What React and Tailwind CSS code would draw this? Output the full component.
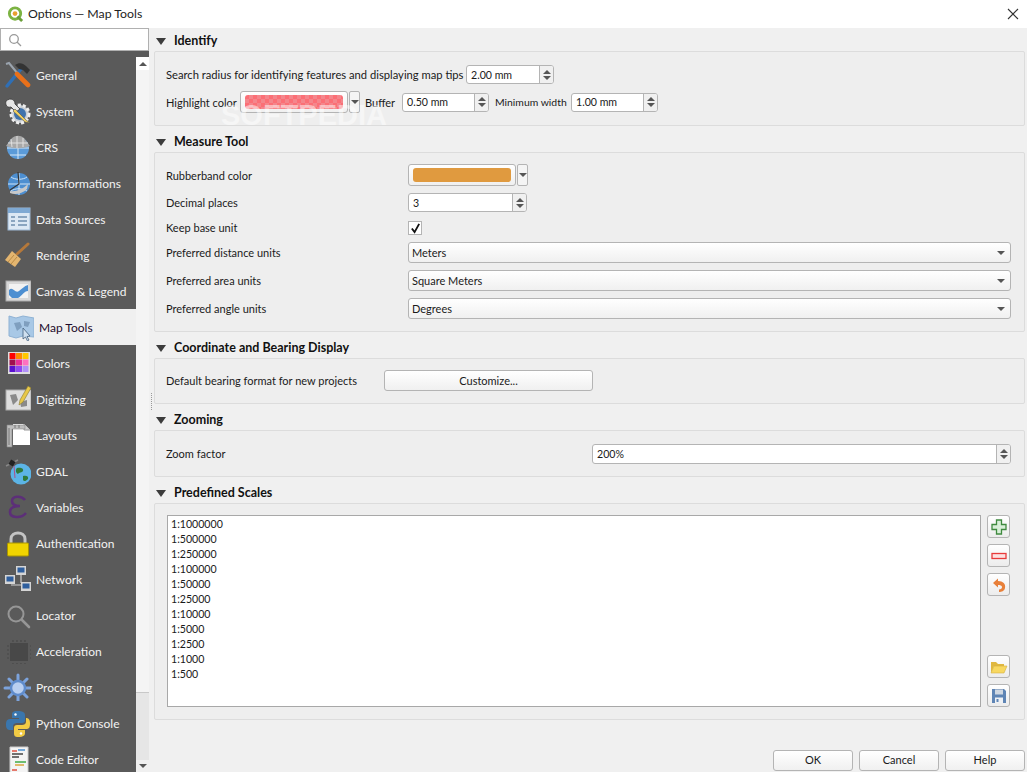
import React from "react";

const I = ({ children }) => (
  <svg viewBox="0 0 28 28" className="w-7 h-7 shrink-0" fill="none">{children}</svg>
);

const icons = {
  general: (
    <I>
      <path d="M4 25 L18 8" stroke="#2f6fb5" strokeWidth="3.4" strokeLinecap="round" />
      <path d="M12 4 C16 1 20 2 23 5 L27 9 L24 13 L20 9 L16 8 Z" fill="#333" />
      <path d="M3 3 L6 2 L15 13" stroke="#9aa3ad" strokeWidth="2" />
      <path d="M14 13 L25 24" stroke="#e8701a" strokeWidth="4.6" strokeLinecap="round" />
    </I>
  ),
  system: (
    <I>
      <circle cx="17" cy="17" r="9" fill="#c9ced4" stroke="#eee" strokeWidth="3" strokeDasharray="3 2" />
      <circle cx="17" cy="17" r="6" fill="#3f73ad" />
      <path d="M3 4 C8 0 12 3 12 7 L17 12 L13 15 L8 10 C4 11 2 8 3 4 Z" fill="#e6e6e6" stroke="#333" strokeWidth="0.8" />
      <path d="M12 12 L23 23 L27 26 L22 25 L10 14 Z" fill="#f0d060" stroke="#555" strokeWidth="0.6" />
    </I>
  ),
  crs: (
    <I>
      <circle cx="15" cy="15" r="11" fill="#5b9bd9" />
      <path d="M4 15 H26 M15 4 V26 M7 22 H23 M8 8 C12 12 18 12 22 8" stroke="#d7e8f7" strokeWidth="1" />
      <path d="M3 13 L9 5 C13 2 17 2 21 5 L27 13 C20 16 10 16 3 13 Z" fill="#a8a8a8" />
      <path d="M8 6 L9 14 M14 3 V15 M20 5 L20 14 M5 10 H25" stroke="#e0e0e0" strokeWidth="1" />
    </I>
  ),
  transform: (
    <I>
      <circle cx="16" cy="15" r="11" fill="#4d8fd1" />
      <path d="M5 15 H27 M16 4 V26 M8 8 C12 11 20 11 24 8 M8 22 C12 19 20 19 24 22" stroke="#cfe3f6" strokeWidth="1" />
      <path d="M7 22 C13 23 20 20 25 15 L24 20 C19 25 12 26 7 24 Z" fill="#c9c9c9" />
      <path d="M15 3 L16 15 L7 21" stroke="#333" strokeWidth="1.2" />
    </I>
  ),
  data: (
    <I>
      <rect x="5" y="3" width="22" height="22" fill="#dce8f4" stroke="#9db8d4" />
      <rect x="5" y="3" width="22" height="5" fill="#7fa9d3" />
      <path d="M8 12 H12 M15 12 H24 M8 16 H12 M15 16 H24 M8 20 H12 M15 20 H24" stroke="#6f8fae" strokeWidth="1.6" />
    </I>
  ),
  render: (
    <I>
      <path d="M14 13 L25 3" stroke="#b5783a" strokeWidth="3" strokeLinecap="round" />
      <path d="M9 10 L18 18 L12 26 L2 19 Z" fill="#e3b56f" />
      <path d="M5 21 L11 14 M8 23 L14 16" stroke="#b98a45" strokeWidth="1" />
    </I>
  ),
  canvas: (
    <I>
      <rect x="3" y="4" width="25" height="20" fill="#d8d8d8" stroke="#aaa" />
      <rect x="6" y="7" width="19" height="14" fill="#f2f2f2" />
      <path d="M6 13 C10 9 12 17 16 14 C19 12 21 9 25 8 V14 C21 14 19 19 15 21 H9 L6 18 Z" fill="#4d8fd1" />
    </I>
  ),
  maptools: (
    <I>
      <path d="M3 3 L10 5 L17 3 L28 5 V24 L17 23 L10 25 L3 23 Z" fill="#a8c8e6" stroke="#8fb2d4" />
      <path d="M8 10 L14 9 L16 14 L11 18 Z M18 8 L24 9 L22 14 L18 13 Z" fill="#7f9fbf" />
      <path d="M17 15 L17 26 L19.5 24 L21.5 28 L23 27 L21 23.5 L24 23 Z" fill="#cfe0f0" stroke="#43607e" strokeWidth="0.8" />
    </I>
  ),
  colors: (
    <I>
      <rect x="5" y="3" width="22" height="22" fill="#ddd" />
      <rect x="6.5" y="4" width="6" height="6" fill="#ff0000" /><rect x="13" y="4" width="6" height="6" fill="#ff8c00" /><rect x="19.5" y="4" width="6" height="6" fill="#ffc800" />
      <rect x="6.5" y="10.5" width="6" height="6" fill="#a01050" /><rect x="13" y="10.5" width="6" height="6" fill="#e8309a" /><rect x="19.5" y="10.5" width="6" height="6" fill="#ff70c0" />
      <rect x="6.5" y="17" width="6" height="6" fill="#5a10d0" /><rect x="13" y="17" width="6" height="6" fill="#9048f0" /><rect x="19.5" y="17" width="6" height="6" fill="#b090f8" />
    </I>
  ),
  digit: (
    <I>
      <rect x="3" y="5" width="25" height="20" fill="#dedede" stroke="#aaa" />
      <path d="M7 10 L13 9 L15 15 L10 20 Z M17 17 L24 15 L24 21 L18 22 Z" fill="#8a8a8a" />
      <path d="M25 1 L28 3 L20 17 L16 20 L17 15 Z" fill="#e8c84a" stroke="#8a7a30" strokeWidth="0.6" />
    </I>
  ),
  layouts: (
    <I>
      <path d="M10 3 H21 L27 9 V24 H10 Z" fill="#fff" />
      <path d="M21 3 V9 H27" fill="#ccc" stroke="#999" />
      <path d="M4 4 H22 V8 H9 V26 H4 Z" fill="#bdbdbd" stroke="#888" strokeWidth="0.6" />
      <path d="M6 7 V24 M12 4 V7 M16 4 V7" stroke="#777" />
    </I>
  ),
  gdal: (
    <I>
      <circle cx="18" cy="17" r="10.5" fill="#5cb4e6" />
      <path d="M14 11 C17 10 21 11 20 14 C19 16 16 15 15 17 C13 16 12 13 14 11 Z M20 19 C23 18 26 19 25 22 C23 24 21 25 20 23 Z" fill="#2f7a3a" />
      <path d="M3 9 L15 3" stroke="#888" strokeWidth="1.5" />
      <rect x="6.5" y="3.5" width="5" height="5" fill="#222" transform="rotate(30 9 6)" />
      <path d="M11 9 L12 21" stroke="#b0508a" strokeWidth="1" />
    </I>
  ),
  vars: (
    <I>
      <path d="M22 7 C18 2 9 3 9 8 C9 12 13 13 17 13 C11 13 7 15 7 19 C7 25 18 26 23 20" stroke="#5c2f78" strokeWidth="2.6" fill="none" />
    </I>
  ),
  auth: (
    <I>
      <path d="M8 15 V10 C8 2 22 2 22 10 V15" stroke="#c4c4c4" strokeWidth="3" />
      <rect x="4.5" y="14" width="21" height="13" rx="1" fill="#f0d400" stroke="#a89400" />
    </I>
  ),
  network: (
    <I>
      <path d="M18 10 V18 M8 20 H20" stroke="#cfcfcf" strokeWidth="1.2" />
      <rect x="13" y="1" width="10" height="9" fill="#d5d5d5" /><rect x="14.5" y="2.5" width="7" height="5" fill="#2f5f9e" />
      <rect x="2" y="10" width="10" height="9" fill="#d5d5d5" /><rect x="3.5" y="11.5" width="7" height="5" fill="#2f5f9e" />
      <rect x="18" y="17" width="10" height="9" fill="#d5d5d5" /><rect x="19.5" y="18.5" width="7" height="5" fill="#2f5f9e" />
    </I>
  ),
  locator: (
    <I>
      <circle cx="13" cy="13" r="7.5" stroke="#969696" strokeWidth="2" />
      <path d="M19 19 L26 26" stroke="#969696" strokeWidth="2.6" strokeLinecap="round" />
    </I>
  ),
  accel: (
    <I>
      <rect x="7" y="6" width="18" height="18" fill="#484848" />
      <path d="M10 3 V27 M14 3 V27 M18 3 V27 M22 3 V27 M4 9 H28 M4 13 H28 M4 17 H28 M4 21 H28" stroke="#484848" strokeWidth="1.2" strokeDasharray="2 21" strokeDashoffset="0" />
    </I>
  ),
  proc: (
    <I>
      <path d="M15 2 V28 M2 15 H28 M6 6 L24 24 M24 6 L6 24" stroke="#7ca3dc" strokeWidth="3" strokeLinecap="round" />
      <circle cx="15" cy="15" r="7" fill="#b9cff0" stroke="#5f8ccc" strokeWidth="2.5" />
    </I>
  ),
  python: (
    <I>
      <path d="M15 2 C9 2 9 4 9 6 V9 H16 V10 H7 C3 10 3 14 3 16 C3 20 5 21 7 21 H10 V17 C10 15 12 14 14 14 H19 C21 14 22 13 22 11 V6 C22 3 19 2 15 2 Z" fill="#3a76ad" />
      <path d="M15 28 C21 28 22 26 22 24 V21 H15 V20 H24 C27 20 27 16 27 14 C27 10 25 9 23 9 H23 V13 C23 15 21 16 19 16 H14 C12 16 11 17 11 19 V24 C11 27 12 28 15 28 Z" fill="#f2cb44" />
      <circle cx="12.5" cy="5.5" r="1.2" fill="#fff" /><circle cx="18" cy="24.5" r="1.2" fill="#fff" />
    </I>
  ),
  code: (
    <I>
      <path d="M7 2 H25 V28 H7 Z" fill="#f4f4f4" stroke="#ccc" />
      <path d="M9 6 H14" stroke="#e05040" strokeWidth="1.5" /><path d="M15 5 H22" stroke="#4a90d0" strokeWidth="1.5" />
      <path d="M9 9 H20 M9 12 H16" stroke="#444" strokeWidth="1.3" />
      <path d="M12 17 H23" stroke="#4caf50" strokeWidth="1.6" />
      <path d="M12 20 H21" stroke="#d8a030" strokeWidth="1.4" />
      <path d="M9 25 H14" stroke="#e05040" strokeWidth="1.5" />
    </I>
  ),
};

const items = [
  ["General", "general"], ["System", "system"], ["CRS", "crs"], ["Transformations", "transform"],
  ["Data Sources", "data"], ["Rendering", "render"], ["Canvas & Legend", "canvas"], ["Map Tools", "maptools"],
  ["Colors", "colors"], ["Digitizing", "digit"], ["Layouts", "layouts"], ["GDAL", "gdal"],
  ["Variables", "vars"], ["Authentication", "auth"], ["Network", "network"], ["Locator", "locator"],
  ["Acceleration", "accel"], ["Processing", "proc"], ["Python Console", "python"], ["Code Editor", "code"],
];

const UpTri = () => <div className="w-0 h-0 border-x-[4px] border-x-transparent border-b-[4px] border-b-[#555]" />;
const DownTri = () => <div className="w-0 h-0 border-x-[4px] border-x-transparent border-t-[4px] border-t-[#555]" />;

const Spin = ({ value, className }) => (
  <div className={"flex bg-white border border-[#b4b4b4] rounded-[3px] overflow-hidden " + className}>
    <div className="flex-1 pl-[4px] pt-[2px] flex items-center text-[10.6px]">{value}</div>
    <div className="w-[14px] border-l border-[#b4b4b4] bg-[#f0f0f0] flex flex-col items-center justify-center gap-[2px]">
      <UpTri />
      <DownTri />
    </div>
  </div>
);

const Combo = ({ value, className = "" }) => (
  <div className={"w-[603px] h-[21px] flex items-center justify-between pl-[3px] pr-[5px] border border-[#b4b4b4] rounded-[3px] bg-gradient-to-b from-white to-[#f0f0f0] " + className}>
    <span className="pt-[2px]">{value}</span>
    <DownTri />
  </div>
);

const ColorBtn = ({ swatch, children }) => (
  <div className="flex h-[22px]">
    <div className="w-[108px] p-[3px_4px] border border-[#b4b4b4] rounded-[3px] bg-gradient-to-b from-white to-[#f0f0f0]">
      <div className={"h-full rounded-[3px] " + swatch}>{children}</div>
    </div>
    <div className="ml-px w-[11px] border border-[#b4b4b4] rounded-[2px] bg-[#f4f4f4] flex items-center justify-center">
      <DownTri />
    </div>
  </div>
);

const Header = ({ title, first }) => (
  <div className={"flex items-end pb-[2px] pl-[2px] shrink-0 " + (first ? "h-[23px]" : "h-[26px]")}>
    <div className="w-[18px] h-[16px] flex items-center">
      <div className="w-0 h-0 border-x-[5.5px] border-x-transparent border-t-[7px] border-t-[#3c3c3c]" />
    </div>
    <span className="font-bold text-[12.5px] text-[#111] leading-[16px]">{title}</span>
  </div>
);

const Box = ({ className, children }) => (
  <div className={"border border-[#dcdcdc] rounded-[2px] bg-[#eeeeee] pl-[11px] shrink-0 " + className}>{children}</div>
);

const Tool = ({ className = "", children }) => (
  <div className={"w-[23px] h-[23px] border border-[#b4b4b4] rounded-[3px] bg-gradient-to-b from-white to-[#ececec] flex items-center justify-center " + className}>
    {children}
  </div>
);

const Btn = ({ children, className = "" }) => (
  <div className={"w-[80px] h-[21px] flex items-center justify-center border border-[#b4b4b4] rounded-[3px] bg-gradient-to-b from-white to-[#f0f0f0] " + className}>
    {children}
  </div>
);

const scales = ["1:1000000", "1:500000", "1:250000", "1:100000", "1:50000", "1:25000", "1:10000", "1:5000", "1:2500", "1:1000", "1:500"];

export default function App() {
  return (
    <div className="relative w-[1027px] h-[772px] overflow-hidden bg-[#f0f0f0] text-[11px] text-[#1a1a1a] font-['Lato','Open_Sans',sans-serif]">
      <div className="h-[28px] bg-white flex items-center pl-[7px]">
        <svg viewBox="0 0 18 18" className="w-[17px] h-[17px]" fill="none">
          <circle cx="8.5" cy="8" r="6" stroke="#7cb342" strokeWidth="3" />
          <circle cx="8.5" cy="8" r="2.5" fill="#e8a030" />
          <path d="M11 11 L16 16" stroke="#6a9e38" strokeWidth="3" />
        </svg>
        <span className="ml-[4px] text-[12.3px] text-[#222]">Options — Map Tools</span>
        <svg viewBox="0 0 12 12" className="ml-auto mr-[8px] w-[12px] h-[12px]" stroke="#333" strokeWidth="1.1">
          <path d="M1 1 L11 11 M11 1 L1 11" />
        </svg>
      </div>

      <div className="flex h-[744px]">
        <div className="w-[149px] shrink-0 flex flex-col">
          <div className="h-[23px] bg-white border border-[#b0b0b0] flex items-center pl-[7px]">
            <svg viewBox="0 0 14 14" className="w-[14px] h-[14px]" fill="none" stroke="#9a9a9a" strokeWidth="1.3">
              <circle cx="6" cy="6" r="4.3" /><path d="M9 9 L13 13" />
            </svg>
          </div>
          <div className="flex-1 flex bg-[#5a5a5a] overflow-hidden">
            <div className="w-[136px] pt-[6px] shrink-0 text-[12px]">
              {items.map(([label, key]) => {
                const active = label === "Map Tools";
                return (
                  <div key={label} className={"h-[36px] flex items-center " + (active ? "bg-[#f0f0f0] text-[#1c0a2a] pl-[6px]" : "text-[#f2f2f2] pl-[3px]")}>
                    {icons[key]}
                    <span className="ml-[5px] whitespace-nowrap pt-[2px]">{label}</span>
                  </div>
                );
              })}
            </div>
            <div className="flex-1 mt-[6px] flex flex-col bg-[#e6e6e6]">
              <div className="h-[13px] bg-white flex items-center justify-center"><UpTri /></div>
              <div className="h-[623px] bg-[#f4f4f4] border-b border-[#c8c8c8]" />
              <div className="flex-1" />
              <div className="h-[12px] bg-[#f0f0f0] flex items-center justify-center"><DownTri /></div>
            </div>
          </div>
        </div>

        <div className="w-[5px] flex items-center justify-center">
          <div className="h-[17px] mb-[-2px] border-l border-dotted border-[#999]" />
        </div>

        <div className="w-[871px] flex flex-col">
          <Header title="Identify" first />
          <Box className="h-[75px] pt-[13px]">
            <div className="flex items-center h-[19px]">
              <span className="w-[300px] whitespace-nowrap text-[11.2px] pt-[2px]">Search radius for identifying features and displaying map tips</span>
              <Spin value="2.00 mm" className="w-[88px] h-[19px]" />
            </div>
            <div className="flex items-center h-[22px] mt-[7px]">
              <span className="w-[74px] whitespace-nowrap pt-[2px]">Highlight color</span>
              <ColorBtn swatch="bg-[repeating-conic-gradient(#f4868c_0_25%,#fb6f76_0_50%)] bg-[length:8px_8px]" />
              <span className="ml-[5px] w-[37px] pt-[2px]">Buffer</span>
              <Spin value="0.50 mm" className="w-[87px] h-[19px]" />
              <span className="ml-[6px] w-[76px] whitespace-nowrap pt-[2px] text-[10.4px]">Minimum width</span>
              <Spin value="1.00 mm" className="w-[87px] h-[19px]" />
            </div>
          </Box>

          <Header title="Measure Tool" />
          <Box className="h-[180px] pt-[11px]">
            <div className="flex items-center h-[22px]">
              <span className="w-[242px] pt-[2px]">Rubberband color</span>
              <ColorBtn swatch="bg-[#e09a3f]" />
            </div>
            <div className="flex items-center h-[19px] mt-[7px]">
              <span className="w-[242px] pt-[2px]">Decimal places</span>
              <Spin value="3" className="w-[119px] h-[19px]" />
            </div>
            <div className="flex items-center h-[14px] mt-[9px]">
              <span className="w-[242px]">Keep base unit</span>
              <div className="w-[14px] h-[14px] bg-white border border-[#b4b4b4] flex items-center justify-center">
                <svg viewBox="0 0 12 12" className="w-[11px] h-[11px]" fill="none" stroke="#111" strokeWidth="2"><path d="M2 6 L5 10 L10 1" /></svg>
              </div>
            </div>
            <div className="flex items-center h-[21px] mt-[7px]">
              <span className="w-[242px] pt-[2px]">Preferred distance units</span>
              <Combo value="Meters" />
            </div>
            <div className="flex items-center h-[21px] mt-[7px]">
              <span className="w-[242px] pt-[2px]">Preferred area units</span>
              <Combo value="Square Meters" />
            </div>
            <div className="flex items-center h-[21px] mt-[7px]">
              <span className="w-[242px] pt-[2px]">Preferred angle units</span>
              <Combo value="Degrees" />
            </div>
          </Box>

          <Header title="Coordinate and Bearing Display" />
          <Box className="h-[46px] pt-[11px]">
            <div className="flex items-center h-[21px]">
              <span className="w-[218px] whitespace-nowrap pt-[2px]">Default bearing format for new projects</span>
              <div className="w-[209px] h-[21px] pt-[2px] flex items-center justify-center border border-[#b4b4b4] rounded-[3px] bg-gradient-to-b from-white to-[#f0f0f0]">Customize...</div>
            </div>
          </Box>

          <Header title="Zooming" />
          <Box className="h-[47px] pt-[13px]">
            <div className="flex items-center h-[20px]">
              <span className="w-[426px]">Zoom factor</span>
              <Spin value="200%" className="w-[419px] h-[20px]" />
            </div>
          </Box>

          <Header title="Predefined Scales" />
          <Box className="h-[217px] pt-[11px] flex">
            <div className="ml-px w-[814px] h-[192px] bg-white border border-[#a8a8a8] px-[3px] pt-[1px] leading-[15px] text-[10.6px]">
              {scales.map((s) => <div key={s} className="h-[15px]">{s}</div>)}
            </div>
            <div className="ml-[6px] flex flex-col">
              <Tool>
                <svg viewBox="0 0 16 16" className="w-[16px] h-[16px]"><path d="M5.5 1 H10.5 V5.5 H15 V10.5 H10.5 V15 H5.5 V10.5 H1 V5.5 H5.5 Z" fill="#d8efd8" stroke="#3f8a3f" strokeWidth="1.3" /></svg>
              </Tool>
              <Tool className="mt-[6px]">
                <svg viewBox="0 0 16 16" className="w-[16px] h-[16px]"><rect x="1" y="5.5" width="14" height="5" fill="#fde0e0" stroke="#e83a3a" strokeWidth="1.3" /></svg>
              </Tool>
              <Tool className="mt-[6px]">
                <svg viewBox="0 0 16 16" className="w-[16px] h-[16px]" fill="none"><path d="M2 6 L7 1.5 V4 C12 4 15 7 14 11 C13.5 14 10.5 15 8 15 L8 12.5 C10 12.5 11 11.5 11 10 C11 8.5 9 8 7 8 V10.5 Z" fill="#e8803a" /></svg>
              </Tool>
              <Tool className="mt-[59px]">
                <svg viewBox="0 0 18 16" className="w-[18px] h-[16px]"><path d="M1 3 H6 L8 5 H14 V7 H4 L1 14 Z" fill="#e0b840" /><path d="M4 7 H17 L14 14 H1 Z" fill="#f8d860" stroke="#d4b040" strokeWidth="0.6" /></svg>
              </Tool>
              <Tool className="mt-[6px]">
                <svg viewBox="0 0 16 16" className="w-[16px] h-[16px]"><path d="M1 1 H13 L15 3 V15 H1 Z" fill="#5f85b5" /><rect x="4" y="1.5" width="8" height="5" fill="#d0d8e2" /><rect x="4" y="9.5" width="8" height="5.5" fill="#eef1f5" /><rect x="5.5" y="11" width="2" height="3" fill="#5f85b5" /></svg>
              </Tool>
            </div>
          </Box>

          <div className="flex justify-end gap-[6px] mt-[30px]">
            <Btn className="border-[#4a90d0]">OK</Btn>
            <Btn>Cancel</Btn>
            <Btn>Help</Btn>
          </div>
        </div>
      </div>

      <div className="absolute left-[221px] top-[98px] text-[29px] font-bold text-white/50 leading-[34px] pointer-events-none font-['Liberation_Sans',sans-serif]">SOFTPEDIA</div>
    </div>
  );
}
